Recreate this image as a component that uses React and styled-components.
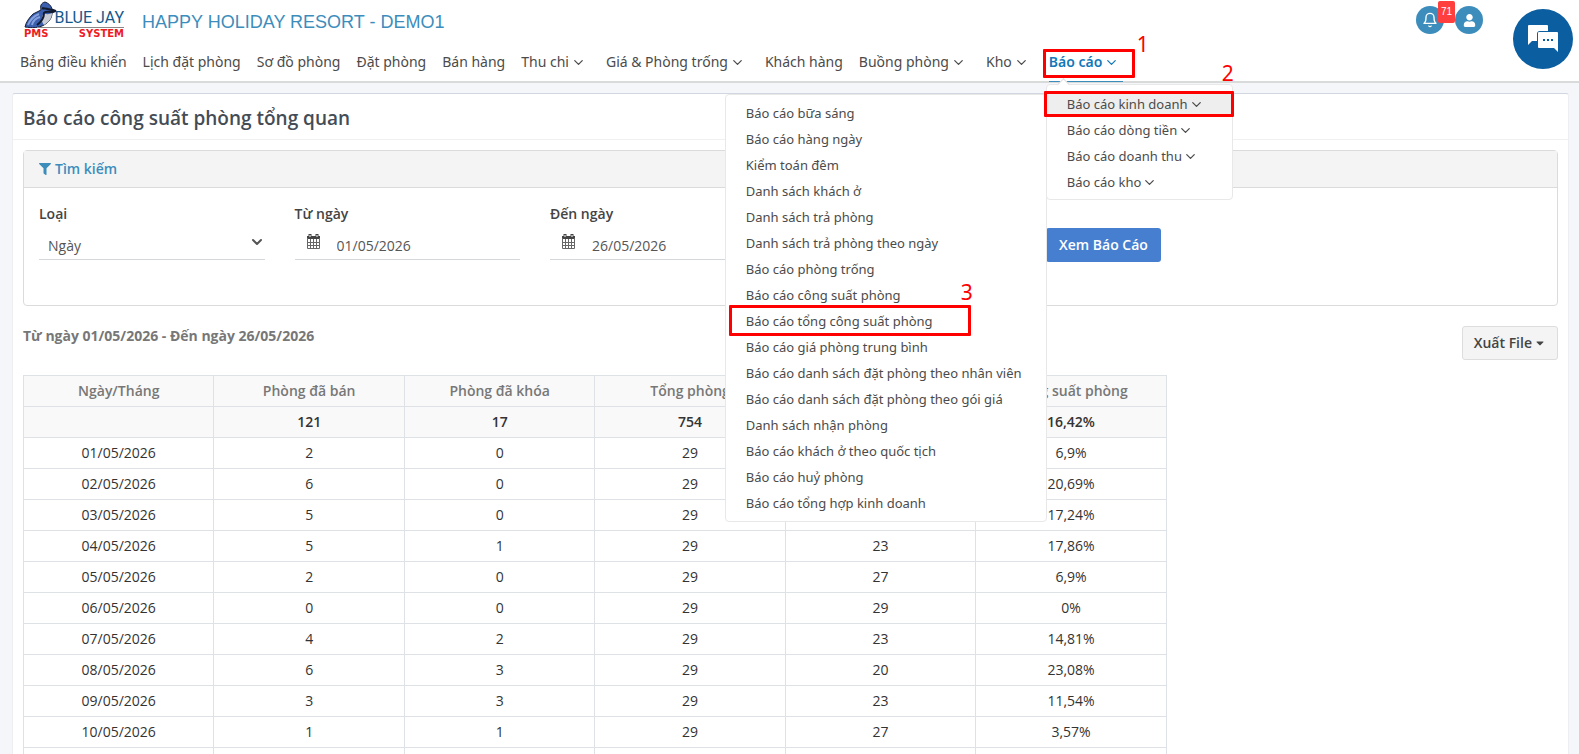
import React from "react";
import styled, { createGlobalStyle } from "styled-components";
import { FaFilter, FaUser, FaCaretDown } from "react-icons/fa";
import { FiBell, FiChevronDown } from "react-icons/fi";

const navItems = [
    { label: "Bảng điều khiển" },
    { label: "Lịch đặt phòng" },
    { label: "Sơ đồ phòng" },
    { label: "Đặt phòng" },
    { label: "Bán hàng" },
    { label: "Thu chi", more: true },
    { label: "Giá & Phòng trống", more: true },
    { label: "Khách hàng" },
    { label: "Buồng phòng", more: true },
    { label: "Kho", more: true },
];

const reportGroups = ["Báo cáo kinh doanh", "Báo cáo dòng tiền", "Báo cáo doanh thu", "Báo cáo kho"];

const businessReports = [
    "Báo cáo bữa sáng",
    "Báo cáo hàng ngày",
    "Kiểm toán đêm",
    "Danh sách khách ở",
    "Danh sách trả phòng",
    "Danh sách trả phòng theo ngày",
    "Báo cáo phòng trống",
    "Báo cáo công suất phòng",
    "Báo cáo tổng công suất phòng",
    "Báo cáo giá phòng trung bình",
    "Báo cáo danh sách đặt phòng theo nhân viên",
    "Báo cáo danh sách đặt phòng theo gói giá",
    "Danh sách nhận phòng",
    "Báo cáo khách ở theo quốc tịch",
    "Báo cáo huỷ phòng",
    "Báo cáo tổng hợp kinh doanh",
];

const columns = ["Ngày/Tháng", "Phòng đã bán", "Phòng đã khóa", "Tổng phòng", "", "Công suất phòng"];

const totals = ["", "121", "17", "754", "", "16,42%"];

const rows = [
    ["01/05/2026", "2", "0", "29", "", "6,9%"],
    ["02/05/2026", "6", "0", "29", "", "20,69%"],
    ["03/05/2026", "5", "0", "29", "", "17,24%"],
    ["04/05/2026", "5", "1", "29", "23", "17,86%"],
    ["05/05/2026", "2", "0", "29", "27", "6,9%"],
    ["06/05/2026", "0", "0", "29", "29", "0%"],
    ["07/05/2026", "4", "2", "29", "23", "14,81%"],
    ["08/05/2026", "6", "3", "29", "20", "23,08%"],
    ["09/05/2026", "3", "3", "29", "23", "11,54%"],
    ["10/05/2026", "1", "1", "29", "27", "3,57%"],
    ["", "", "", "", "", ""],
];

function Logo() {
    return (
        <LogoLink href="#" aria-label="Blue Jay PMS System">
            <svg width="102" height="40" viewBox="0 0 102 40">
                <path d="M1 27 C2 22 5 18 9 14 L17 10 C16 6 17 3 21 2 C24 3 27 5 28 9 L32 11 L28 13 C28 18 25 22 20 25 C15 28 8 28 1 27Z" fill="#3a5fae" stroke="#151f3d" strokeWidth="1" />
                <path d="M20 13 C23 15 26 14 28 13 C28 18 25 22 20 25 C17 21 17 17 20 13Z" fill="#c9cdd6" />
                <path d="M18 8 C20 9 22 8 24 9 L32 11 L27 12 C24 12 22 11 20 13 C20 18 17 22 13 25" fill="none" stroke="#111a2e" strokeWidth="2" />
                <path d="M4 25 C6 20 10 16 15 14 M8 25 C9 21 12 18 16 17" fill="none" stroke="#86a1dc" strokeWidth="2" />
                <path d="M13 27h87v1H13z" fill="#888" />
                <LogoName x="100" y="23" textAnchor="end">BLUE JAY</LogoName>
                <LogoTag x="0" y="37">PMS</LogoTag>
                <LogoTag x="100" y="37" textAnchor="end">SYSTEM</LogoTag>
            </svg>
        </LogoLink>
    );
}

function CalendarIcon() {
    return (
        <svg width="15" height="15" viewBox="0 0 15 15">
            <path d="M1 2h13v3H1z" fill="#444" />
            <path d="M4 0v3M11 0v3" stroke="#444" strokeWidth="3" />
            <path d="M4 1v2M11 1v2" stroke="#fff" strokeWidth="1" />
            <path d="M1.500 4v10.500h12V4M4.500 5v9M7.500 5v9M10.500 5v9M1 8.500h13M1 11.500h13" fill="none" stroke="#666" strokeWidth="1" />
        </svg>
    );
}

function Header() {
    return (
        <HeaderBar>
            <Brand>
                <Logo />
                <HotelName>HAPPY HOLIDAY RESORT - DEMO1</HotelName>
                <Account>
                    <RoundButton aria-label="Thông báo">
                        <FiBell size={16} />
                        <Count>71</Count>
                    </RoundButton>
                    <RoundButton aria-label="Tài khoản">
                        <FaUser size={13} />
                    </RoundButton>
                </Account>
            </Brand>
            <Nav>
                {navItems.map((item) => (
                    <NavItem key={item.label} $more={item.more}>
                        <a href="#">
                            {item.label}
                            {item.more && <FiChevronDown size={15} />}
                        </a>
                    </NavItem>
                ))}
                <NavItem $more $active>
                    <a href="#">
                        Báo cáo
                        <FiChevronDown size={15} />
                    </a>
                    <Marker $top={-2} $left={-6} $width={92} $height={29}>
                        <Step $top={-20} $right={-17}>1</Step>
                    </Marker>
                    <ReportMenu />
                </NavItem>
            </Nav>
        </HeaderBar>
    );
}

function ReportMenu() {
    return (
        <Dropdown>
            {reportGroups.map((group, i) => (
                <MenuItem key={group} $open={i === 0}>
                    <a href="#">
                        {group}
                        <FiChevronDown size={15} />
                    </a>
                    {i === 0 && (
                        <Marker $top={0} $left={-3} $width={190} $height={26}>
                            <Step $top={-33} $right={-3}>2</Step>
                        </Marker>
                    )}
                </MenuItem>
            ))}
            <SubMenu>
                {businessReports.map((report) => (
                    <MenuItem key={report}>
                        <a href="#">{report}</a>
                        {report === "Báo cáo tổng công suất phòng" && (
                            <Marker $top={-3} $left={3} $width={242} $height={31}>
                                <Step $top={-28} $right={-5}>3</Step>
                            </Marker>
                        )}
                    </MenuItem>
                ))}
            </SubMenu>
        </Dropdown>
    );
}

function Filters() {
    return (
        <Panel>
            <PanelHead>
                <FaFilter size={12} />
                Tìm kiếm
            </PanelHead>
            <FilterRow>
                <Field>
                    <label htmlFor="type">Loại</label>
                    <SelectBox>
                        <select id="type" defaultValue="day">
                            <option value="day">Ngày</option>
                        </select>
                        <FiChevronDown size={16} strokeWidth={3} />
                    </SelectBox>
                </Field>
                <Field>
                    <label htmlFor="from">Từ ngày</label>
                    <DateBox>
                        <CalendarIcon />
                        <input id="from" type="text" defaultValue="01/05/2026" />
                    </DateBox>
                </Field>
                <Field>
                    <label htmlFor="to">Đến ngày</label>
                    <DateBox>
                        <CalendarIcon />
                        <input id="to" type="text" defaultValue="26/05/2026" />
                    </DateBox>
                </Field>
                <ViewButton type="button">Xem Báo Cáo</ViewButton>
            </FilterRow>
        </Panel>
    );
}

function ReportTable() {
    return (
        <Table>
            <thead>
                <tr>
                    {columns.map((name, i) => (
                        <th key={i} scope="col">{name}</th>
                    ))}
                </tr>
            </thead>
            <tbody>
                <TotalRow>
                    {totals.map((value, i) => (
                        <td key={i}>{value}</td>
                    ))}
                </TotalRow>
                {rows.map((row) => (
                    <tr key={row[0]}>
                        {row.map((value, i) => (
                            <td key={i}>{value}</td>
                        ))}
                    </tr>
                ))}
            </tbody>
        </Table>
    );
}

function App() {
    return (
        <Page>
            <GlobalStyle />
            <Header />
            <Card>
                <CardTitle>Báo cáo công suất phòng tổng quan</CardTitle>
                <CardBody>
                    <Filters />
                    <Summary>
                        <p>Từ ngày 01/05/2026 - Đến ngày 26/05/2026</p>
                        <ExportButton type="button">
                            Xuất File
                            <FaCaretDown size={12} />
                        </ExportButton>
                    </Summary>
                    <ReportTable />
                </CardBody>
            </Card>
            <ChatButton aria-label="Chat">
                <svg width="32" height="30" viewBox="0 0 32 30">
                    <path d="M2 1h18a1 1 0 0 1 1 1v5h-8a3 3 0 0 0-3 3v7H5l-4 4V2a1 1 0 0 1 1-1z" fill="#fff" />
                    <path d="M12 8h18a1 1 0 0 1 1 1v19l-4-4H12a1 1 0 0 1-1-1V9a1 1 0 0 1 1-1z" fill="#fff" />
                    <path d="M16 15h2v2h-2zM20 15h2v2h-2zM24 15h2v2h-2z" fill="#0b5e9f" />
                </svg>
            </ChatButton>
        </Page>
    );
}

export default App;

const GlobalStyle = createGlobalStyle`
    * {
        box-sizing: border-box;
    }
    body {
        margin: 0;
        background: #f5f6fa;
        color: #333;
        font-family: "Segoe UI", "Open Sans", "Noto Sans", sans-serif;
        font-size: 14px;
        line-height: 20px;
    }
    a {
        color: inherit;
        text-decoration: none;
    }
    button, input, select {
        font: inherit;
        color: inherit;
    }
    svg {
        flex-shrink: 0;
    }
`;

const Page = styled.div`
    height: 100vh;
    overflow: hidden;
`;

const HeaderBar = styled.header`
    display: flex;
    flex-direction: column;
    height: 83px;
    padding: 0 20px;
    background: #fff;
    border-bottom: 2px solid #d9dbdb;
`;

const Brand = styled.div`
    display: flex;
    align-items: center;
    height: 44px;
    padding-right: 76px;
`;

const LogoLink = styled.a`
    display: flex;
    padding: 0 16px 4px 4px;
`;

const LogoName = styled.text`
    fill: #14598c;
    font-family: Roboto, "Liberation Sans", Arial, sans-serif;
    font-size: 16px;
`;

const LogoTag = styled.text`
    fill: #ee1c25;
    font-family: "DejaVu Sans", sans-serif;
    font-size: 10px;
    font-weight: 700;
`;

const HotelName = styled.span`
    flex: 1;
    color: #3c8dbc;
    font-family: "Liberation Sans", Arial, sans-serif;
    font-size: 18px;
    line-height: 20px;
`;

const Account = styled.div`
    display: flex;
    gap: 11px;
    padding-bottom: 4px;
`;

const RoundButton = styled.button`
    position: relative;
    display: flex;
    align-items: center;
    justify-content: center;
    width: 28px;
    height: 28px;
    padding: 0;
    border: 0;
    border-radius: 50%;
    background: #3c8dbc;
    color: #fff;
`;

const Count = styled.span`
    position: absolute;
    top: -5px;
    right: -11px;
    width: 17px;
    background: #ff3e3e;
    border-radius: 2px;
    font: 10px/22px "Liberation Sans", Arial, sans-serif;
    text-align: center;
`;

const Nav = styled.nav`
    display: flex;
    gap: 16px;
    padding-top: 7px;
`;

const NavItem = styled.div`
    position: relative;
    height: 31px;
    padding-right: ${(props) => (props.$more ? "4px" : "0")};
    color: ${(props) => (props.$active ? "#1278b8" : "#4b4b4b")};
    border-bottom: 1px solid ${(props) => (props.$active ? "#3c8dbc" : "transparent")};
    font-family: "Segoe UI", "Noto Sans", sans-serif;
    font-size: 14px;
    line-height: 22px;
    font-weight: ${(props) => (props.$active ? 600 : 400)};
    white-space: nowrap;
    > a {
        display: flex;
        align-items: center;
        gap: 2px;
    }
`;

const Dropdown = styled.div`
    position: absolute;
    top: 33px;
    left: -3px;
    z-index: 2;
    width: 187px;
    padding: 6px 0 4px;
    background: #fff;
    border: 1px solid #e8e8e8;
    border-radius: 4px;
    font-weight: 400;
    &::before {
        content: "";
        position: absolute;
        top: -5px;
        left: 12px;
        width: 8px;
        height: 8px;
        background: #fff;
        border: 1px solid #ddd;
        border-width: 1px 0 0 1px;
        transform: rotate(45deg);
    }
`;

const SubMenu = styled.div`
    position: absolute;
    top: 9px;
    right: 100%;
    width: 322px;
    padding: 5px 0;
    background: #fff;
    border: 1px solid #e8e8e8;
    border-radius: 4px;
`;

const MenuItem = styled.div`
    position: relative;
    padding: 0 20px;
    background: ${(props) => (props.$open ? "#eee" : "none")};
    color: #4b4b4b;
    font-size: 13px;
    line-height: 26px;
    > a {
        display: flex;
        align-items: center;
        gap: 1px;
    }
`;

// red outline of a walkthrough step
const Marker = styled.div`
    position: absolute;
    z-index: 3;
    top: ${(props) => props.$top}px;
    left: ${(props) => props.$left}px;
    width: ${(props) => props.$width}px;
    height: ${(props) => props.$height}px;
    border: 3px solid #f00;
    border-radius: 1px;
    pointer-events: none;
`;

const Step = styled.span`
    position: absolute;
    top: ${(props) => props.$top}px;
    right: ${(props) => props.$right}px;
    color: #f00;
    font-size: 21px;
    line-height: 24px;
    font-weight: 400;
`;

const Card = styled.main`
    margin: 10px 10px 0 12px;
    min-height: 100vh;
    background: #fff;
    border: 1px solid #eceef2;
    border-top-color: #d2d6de;
    border-radius: 3px;
`;

const CardTitle = styled.h1`
    margin: 0;
    padding: 13px 10px 10px;
    border-bottom: 1px solid #f0f0f0;
    color: #444c55;
    font-size: 19px;
    line-height: 22px;
    font-weight: 600;
`;

const CardBody = styled.div`
    padding: 10px;
`;

const Panel = styled.section`
    border: 1px solid #d9dbdd;
    border-radius: 4px;
`;

const PanelHead = styled.div`
    display: flex;
    align-items: center;
    gap: 4px;
    padding: 8px 15px;
    background: #f4f4f4;
    border-bottom: 1px solid #d9dbdd;
    color: #3c8dbc;
    font-weight: 600;
`;

const FilterRow = styled.div`
    display: grid;
    grid-template-columns: repeat(6, minmax(0, 1fr));
    padding: 16px 0 43px;
`;

const Field = styled.div`
    padding: 0 15px;
    color: #555;
    label {
        display: block;
        color: #444;
        font-weight: 600;
    }
`;

const SelectBox = styled.div`
    display: flex;
    align-items: center;
    height: 36px;
    border-bottom: 1px solid #d5d8da;
    select {
        flex: 1;
        min-width: 0;
        height: 34px;
        margin-right: -14px;
        padding: 8px 9px 0;
        background: none;
        border: 0;
        appearance: none;
    }
`;

const DateBox = styled.div`
    display: flex;
    align-items: center;
    gap: 16px;
    height: 36px;
    padding-left: 11px;
    border-bottom: 1px solid #d5d8da;
    input {
        flex: 1;
        min-width: 0;
        padding: 8px 0 0;
        background: none;
        border: 0;
    }
`;

const ViewButton = styled.button`
    grid-column: 5;
    justify-self: start;
    height: 34px;
    margin-top: 24px;
    padding: 0 13px;
    background: #467fd0;
    border: 0;
    border-radius: 3px;
    color: #fff;
    font-weight: 600;
`;

const Summary = styled.div`
    display: flex;
    align-items: center;
    justify-content: space-between;
    padding: 20px 0 15px;
    p {
        margin: 0 0 14px;
        color: #777;
        font-weight: 700;
    }
`;

const ExportButton = styled.button`
    display: flex;
    align-items: center;
    gap: 2px;
    height: 34px;
    padding: 0 11px;
    background: #f4f4f4;
    border: 1px solid #ddd;
    border-radius: 3px;
    color: #444;
    font-weight: 600;
`;

const Table = styled.table`
    width: calc((100% + 30px) * 0.75 - 30px);
    table-layout: fixed;
    border-collapse: collapse;
    text-align: center;
    th, td {
        height: 31px;
        padding: 0;
        border: 1px solid #dee2e6;
    }
    th {
        background: #f9f9f9;
        color: #777;
        font-weight: 600;
    }
`;

const TotalRow = styled.tr`
    background: #f9f9f9;
    font-weight: 600;
`;

const ChatButton = styled.button`
    position: fixed;
    top: 9px;
    right: 6px;
    display: flex;
    align-items: center;
    justify-content: center;
    width: 60px;
    height: 60px;
    border: 0;
    border-radius: 50%;
    background: #0b5e9f;
`;
